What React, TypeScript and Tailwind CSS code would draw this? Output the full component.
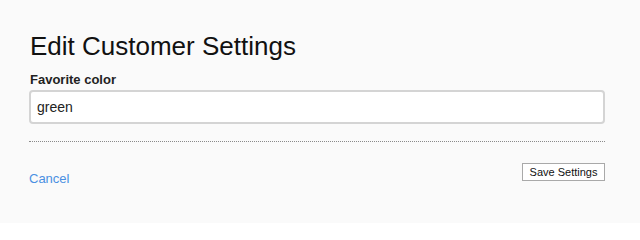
export default function App() {
  return (
    <div className="min-h-[223px] w-full bg-[#fafafa] font-['Liberation_Sans',Arial,sans-serif] text-[#111]">
      <div className="w-[576px] pl-[29px] pt-[31px] box-content">
        <h1 className="text-[26px] leading-[30px] font-normal pl-px">Edit Customer Settings</h1>

        <label className="mt-[11px] block pl-px text-[13px] font-bold leading-[16px] text-[#222]">
          Favorite color
        </label>
        <input
          type="text"
          defaultValue="green"
          className="mt-[2px] block h-[34px] w-full rounded-[4px] border-2 border-[#d4d4d4] bg-white px-[6px] text-[14px] text-[#222] outline-none"
        />

        <div className="mt-[17px] border-t border-dotted border-[#8a8a8a]" />

        <div className="mt-[21px] flex items-start justify-between">
          <a href="#" className="mt-[8px] text-[13px] leading-[16px] text-[#4a90e2]">
            Cancel
          </a>
          <button
            type="button"
            className="h-[18px] w-[83px] border border-[#a9a9a9] bg-white text-[11px] leading-[16px] text-[#111]"
          >
            Save Settings
          </button>
        </div>
      </div>
    </div>
  );
}
